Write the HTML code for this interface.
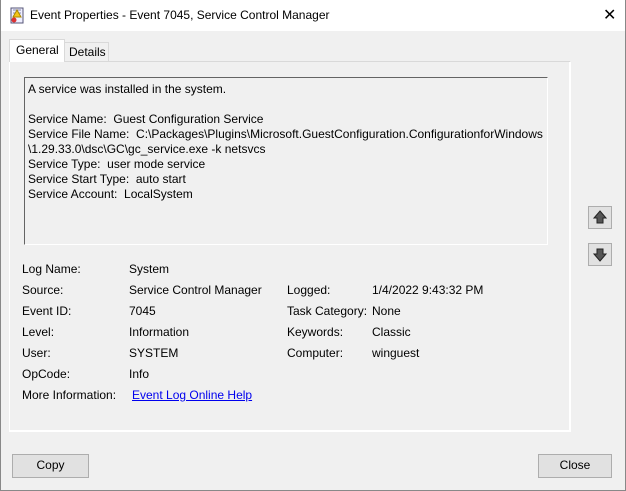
<!DOCTYPE html>
<html><head><meta charset="utf-8"><style>
*{margin:0;padding:0;box-sizing:border-box}
body{width:626px;height:491px;background:#f0f0f0;font-family:"Liberation Sans",sans-serif;font-size:12px;color:#000;position:relative;overflow:hidden}
.win{position:absolute;left:0;top:0;width:626px;height:491px;border:1px solid #888;border-top:none}
.title{position:absolute;left:0;top:0;width:626px;height:31px;background:#fff}
.title .t{position:absolute;left:30px;top:8px;font-size:12px}
.title .x{position:absolute;left:603px;top:5px;font-size:16px}
.a{position:absolute;white-space:nowrap}
.tab{position:absolute;border:1px solid #d9d9d9;border-bottom:none}
.panel{position:absolute;left:9px;top:61px;width:562px;height:371px;border:1px solid #fff;border-top-color:#d9d9d9;border-left-color:#fff;box-shadow:inset -1px -1px 0 #fff}
.tb{position:absolute;left:24px;top:77px;width:524px;height:168px;border:1px solid #fff;border-top-color:#646464;border-left-color:#646464;padding:4px 3px;line-height:15px}
.btn{position:absolute;background:#e1e1e1;border:1px solid #adadad;text-align:center;line-height:21px}
.arr{position:absolute;width:24px;height:23px;border:1px solid #adadad;background:#e1e1e1}
a{color:#0000ee;text-decoration:underline}
</style></head><body>
<div class="title">
<svg style="position:absolute;left:9px;top:7px" width="16" height="17" viewBox="0 0 16 17"><rect x="2" y="1" width="12" height="15" fill="#eef" stroke="#557"/><path d="M4 3h8M4 6h8M4 9h8" stroke="#88a"/><path d="M8 3l4 7H4z" fill="#f5c518" stroke="#a80"/><circle cx="5" cy="13" r="2.5" fill="#d33"/></svg>
<div class="t">Event Properties - Event 7045, Service Control Manager</div>
<div class="x">✕</div>
</div>
<div class="panel"></div>
<div class="tab" style="left:9px;top:39px;width:56px;height:23px;background:#fff"></div>
<div class="a" style="left:16px;top:43px">General</div>
<div class="tab" style="left:64px;top:42px;width:45px;height:19px"></div>
<div class="a" style="left:69px;top:45px">Details</div>
<div class="tb">A service was installed in the system.<br><br>Service Name:&nbsp; Guest Configuration Service<br>Service File Name:&nbsp; C:\Packages\Plugins\Microsoft.GuestConfiguration.ConfigurationforWindows<br>\1.29.33.0\dsc\GC\gc_service.exe -k netsvcs<br>Service Type:&nbsp; user mode service<br>Service Start Type:&nbsp; auto start<br>Service Account:&nbsp; LocalSystem</div>
<div class="arr" style="left:588px;top:206px"><svg width="22" height="21"><path d="M11 4l6 7h-3v5h-6v-5h-3z" fill="#555" stroke="#222"/></svg></div>
<div class="arr" style="left:588px;top:243px"><svg width="22" height="21"><path d="M11 17l6-7h-3v-5h-6v5h-3z" fill="#555" stroke="#222"/></svg></div>
<div class="a" style="left:22px;top:262px">Log Name:</div><div class="a" style="left:129px;top:262px">System</div>
<div class="a" style="left:22px;top:283px">Source:</div><div class="a" style="left:129px;top:283px">Service Control Manager</div>
<div class="a" style="left:287px;top:283px">Logged:</div><div class="a" style="left:372px;top:283px">1/4/2022 9:43:32 PM</div>
<div class="a" style="left:22px;top:304px">Event ID:</div><div class="a" style="left:129px;top:304px">7045</div>
<div class="a" style="left:287px;top:304px">Task Category:</div><div class="a" style="left:372px;top:304px">None</div>
<div class="a" style="left:22px;top:325px">Level:</div><div class="a" style="left:129px;top:325px">Information</div>
<div class="a" style="left:287px;top:325px">Keywords:</div><div class="a" style="left:372px;top:325px">Classic</div>
<div class="a" style="left:22px;top:346px">User:</div><div class="a" style="left:129px;top:346px">SYSTEM</div>
<div class="a" style="left:287px;top:346px">Computer:</div><div class="a" style="left:372px;top:346px">winguest</div>
<div class="a" style="left:22px;top:367px">OpCode:</div><div class="a" style="left:129px;top:367px">Info</div>
<div class="a" style="left:22px;top:388px">More Information:</div><div class="a" style="left:132px;top:388px"><a>Event Log Online Help</a></div>
<div class="btn" style="left:12px;top:454px;width:77px;height:24px">Copy</div>
<div class="btn" style="left:538px;top:454px;width:74px;height:24px">Close</div>
<div class="win"></div>
</body></html>
